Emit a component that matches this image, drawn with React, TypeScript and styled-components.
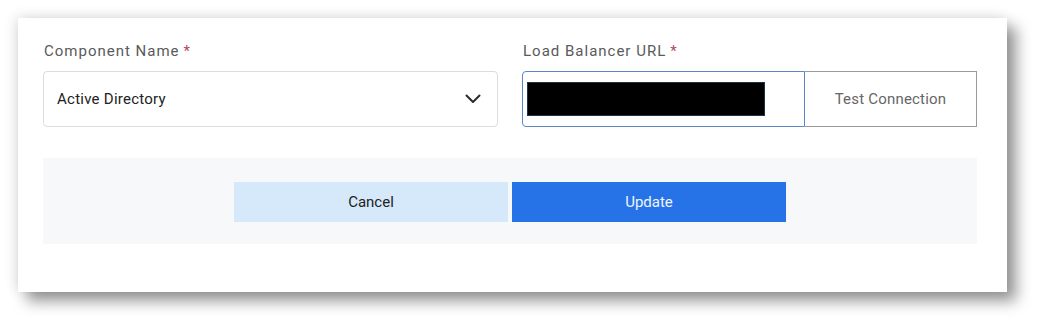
import React from "react";
import styled, { createGlobalStyle } from "styled-components";

const GlobalStyle = createGlobalStyle`
  html, body {
    margin: 0;
    padding: 0;
    background: #ffffff;
    font-family: Roboto, "Liberation Sans", Arial, sans-serif;
  }
`;

const Page = styled.div`
  width: 1044px;
  height: 329px;
  padding: 18px 0 0 18px;
  box-sizing: border-box;
`;

const Card = styled.div`
  width: 989px;
  height: 274px;
  box-sizing: border-box;
  background: #ffffff;
  padding: 24px 30px 0 25px;
  box-shadow: 9px 9px 14px rgba(0, 0, 0, 0.42), -3px -2px 12px rgba(0, 0, 0, 0.1);
`;

const FieldRow = styled.div`
  display: grid;
  grid-template-columns: 455px 455px;
  column-gap: 24px;
`;

const Field = styled.div`
  display: flex;
  flex-direction: column;
`;

const Label = styled.label`
  font-size: 15px;
  line-height: 18px;
  color: #5a5a5a;
  letter-spacing: 1px;
  margin-bottom: 11px;
  padding-left: 1px;
`;

const Required = styled.span`
  color: #b5475a;
  margin-left: 4px;
`;

const SelectBox = styled.div`
  height: 56px;
  box-sizing: border-box;
  border: 1px solid #dcdcdc;
  border-radius: 4px;
  display: flex;
  align-items: center;
  justify-content: space-between;
  padding: 0 16px 0 13px;
  font-size: 15px;
  letter-spacing: 0.25px;
  color: #222222;
`;

const InputGroup = styled.div`
  height: 56px;
  display: flex;
`;

const UrlInput = styled.div`
  flex: 0 0 283px;
  box-sizing: border-box;
  border: 1px solid #5b88c4;
  border-radius: 4px 0 0 4px;
  display: flex;
  align-items: center;
  padding-left: 4px;
`;

const Redacted = styled.div`
  width: 236px;
  height: 32px;
  background: #000000;
  border: 1px solid #1b3446;
`;

const TestButton = styled.button`
  flex: 1;
  border: 1px solid #9a9a9a;
  border-left: none;
  background: #ffffff;
  font-family: inherit;
  font-size: 15px;
  color: #666666;
  letter-spacing: 0.2px;
  cursor: pointer;
`;

const Footer = styled.div`
  margin-top: 31px;
  height: 86px;
  background: #f6f8fa;
  display: flex;
  justify-content: center;
  align-items: center;
  gap: 4px;
  padding-top: 2px;
  box-sizing: border-box;
`;

const ActionButton = styled.button<{ $primary?: boolean }>`
  width: 274px;
  height: 40px;
  border: none;
  font-family: inherit;
  font-size: 15px;
  cursor: pointer;
  background: ${(p) => (p.$primary ? "#2673e8" : "#d6e9fb")};
  color: ${(p) => (p.$primary ? "#f1f5fb" : "#222222")};
`;

function Chevron() {
  return (
    <svg width="16" height="10" viewBox="0 0 16 10" fill="none">
      <path d="M1.5 1.5 L8 8 L14.5 1.5" stroke="#2b2b2b" strokeWidth="2" strokeLinecap="round" strokeLinejoin="round" />
    </svg>
  );
}

export default function App() {
  return (
    <>
      <GlobalStyle />
      <Page>
        <Card>
          <FieldRow>
            <Field>
              <Label>
                Component Name<Required>*</Required>
              </Label>
              <SelectBox>
                Active Directory
                <Chevron />
              </SelectBox>
            </Field>
            <Field>
              <Label>
                Load Balancer URL<Required>*</Required>
              </Label>
              <InputGroup>
                <UrlInput>
                  <Redacted />
                </UrlInput>
                <TestButton>Test Connection</TestButton>
              </InputGroup>
            </Field>
          </FieldRow>
          <Footer>
            <ActionButton>Cancel</ActionButton>
            <ActionButton $primary>Update</ActionButton>
          </Footer>
        </Card>
      </Page>
    </>
  );
}
